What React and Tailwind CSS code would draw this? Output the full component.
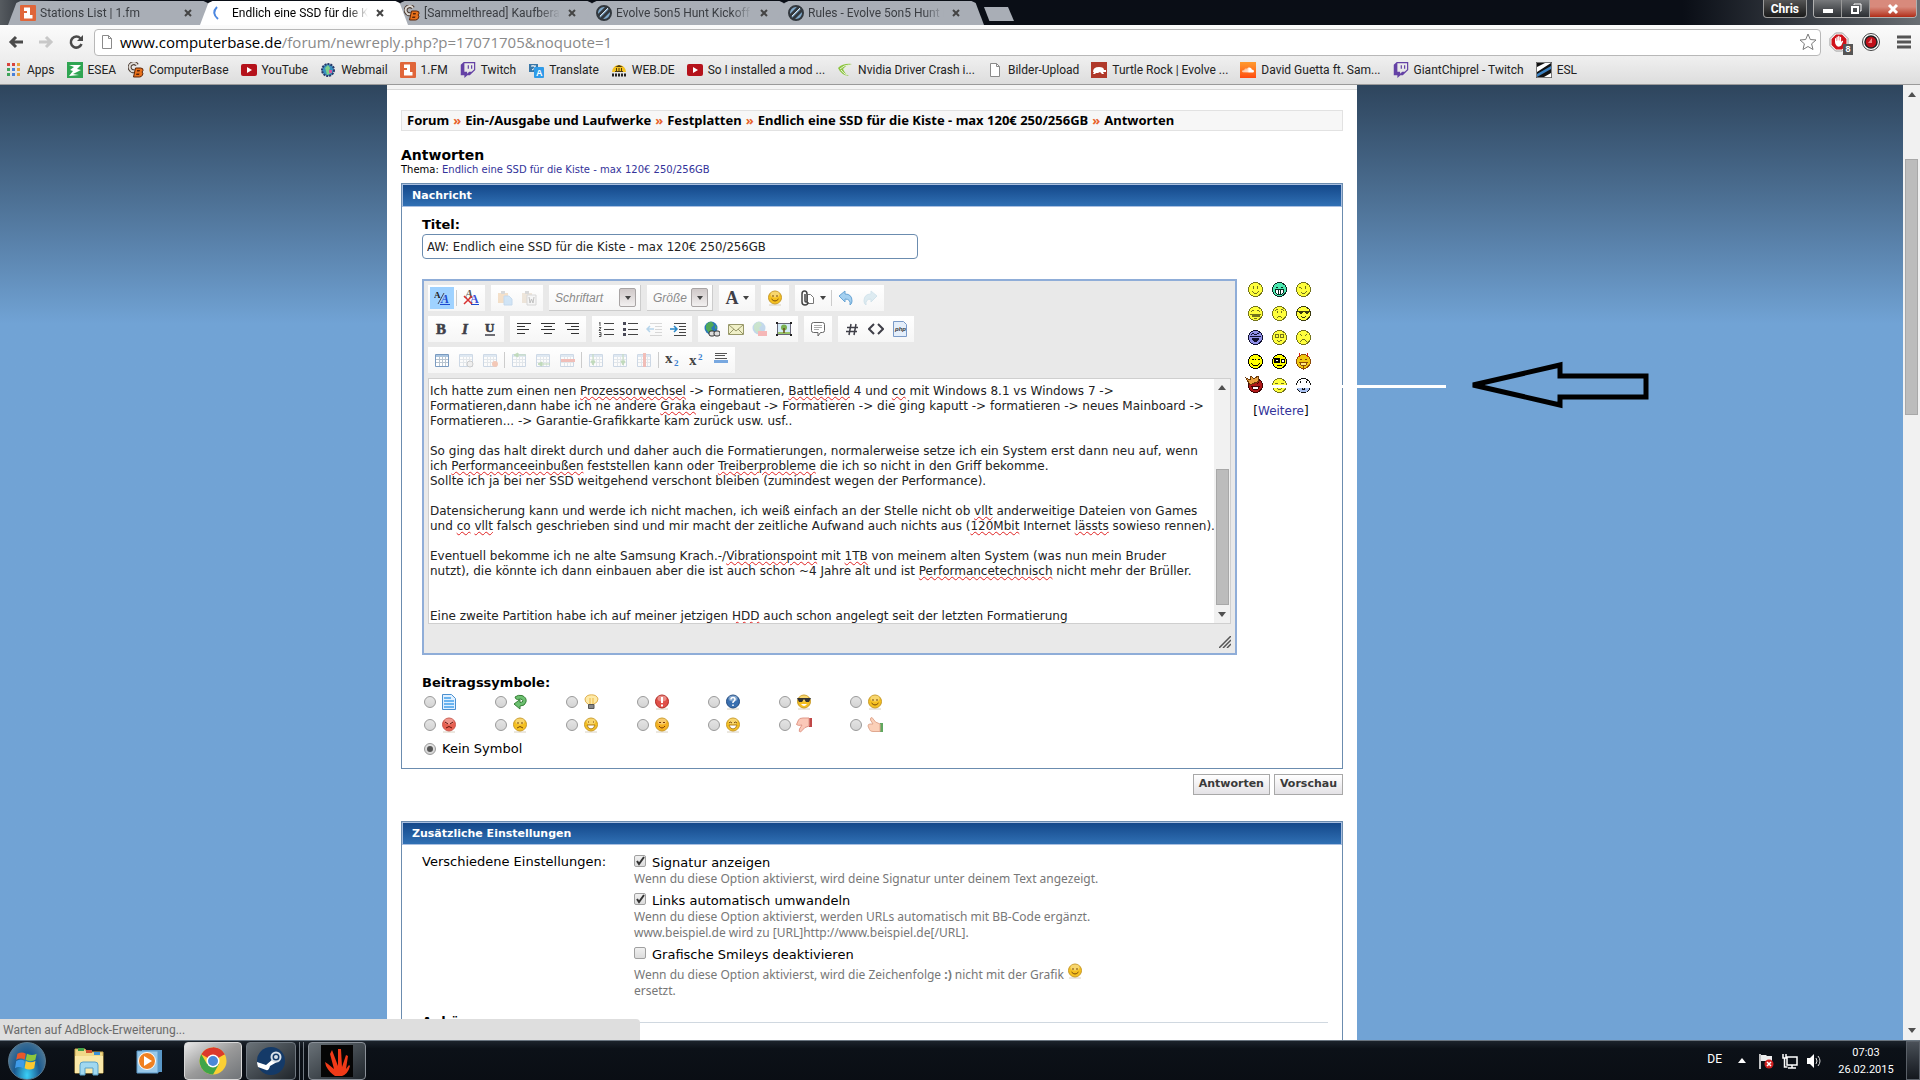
import { useState } from 'react';
import clsx from 'clsx';
import { FaTwitch, FaSoundcloud } from 'react-icons/fa';

/* ---------- favicons ---------- */

function FmIcon() {
  return (
    <svg viewBox="0 0 16 16" className="w-4 h-4 shrink-0">
      <rect width="16" height="16" rx="1" fill="#e0663a" />
      <path d="M4 2.500h6v7.500h2.500v3.500H4V8h3V6H4z" fill="#fff" />
    </svg>
  );
}

function CbIcon() {
  return (
    <svg viewBox="0 0 16 16" className="w-4 h-4 shrink-0">
      <path d="M9 3A4 4 0 1 0 7 9" fill="none" stroke="#4a3a30" strokeWidth="4" />
      <path d="M9 3A4 4 0 1 0 7 9" fill="none" stroke="#dcd8d4" strokeWidth="2" />
      <path d="M7.500 6h5q3 0 2.500 2.500L14 10q1.500 1 .5 3-1 2-3 2H5.500z" fill="#e8711c" stroke="#5a2408" />
      <path d="M9 8h3l-.5 1.500H9zM8.500 11.500h3l-.5 1.500h-3z" fill="#5a2408" />
    </svg>
  );
}

function EslRoundIcon() {
  return (
    <svg viewBox="0 0 16 16" className="w-4 h-4 shrink-0">
      <circle cx="8" cy="8" r="7" fill="#7fa8c8" stroke="#32383e" strokeWidth="2" />
      <path d="M2 11 11 2M5 14 14 5" stroke="#32383e" strokeWidth="3" />
      <path d="M4 11 12 3" stroke="#d8e2ea" strokeWidth="1" />
    </svg>
  );
}

function SpinnerIcon() {
  return (
    <svg viewBox="0 0 16 16" className="w-4 h-4 shrink-0">
      <path d="M5 2Q-1 8 6 14" fill="none" stroke="#4a86e0" strokeWidth="2" />
    </svg>
  );
}

function AppsIcon() {
  const colors = ['#d8433c', '#d8433c', '#e8a33c', '#3fa45a', '#4a80d8', '#e8a33c', '#3fa45a', '#4a80d8', '#e8a33c'];
  return (
    <svg viewBox="0 0 16 16" className="w-4 h-4 shrink-0">
      {colors.map((c, i) => (
        <rect key={i} x={1 + (i % 3) * 5} y={1 + Math.floor(i / 3) * 5} width="3" height="3" fill={c} />
      ))}
    </svg>
  );
}

function EseaIcon() {
  return (
    <svg viewBox="0 0 16 16" className="w-4 h-4 shrink-0">
      <rect width="16" height="16" fill="#2fa552" />
      <path d="M2 3h12l-4 4 4 1-8 4 6 1-10 1 4-5-3-1 4-3z" fill="#fff" />
    </svg>
  );
}

function YoutubeIcon() {
  return (
    <svg viewBox="0 0 16 16" className="w-4 h-4 shrink-0">
      <rect y="2" width="16" height="12" rx="2" fill="#b5121b" />
      <path d="M6 5v6l5-3z" fill="#fff" />
    </svg>
  );
}

function WebmailIcon() {
  return (
    <svg viewBox="0 0 16 16" className="w-4 h-4 shrink-0">
      <circle cx="8" cy="8" r="6" fill="#3a8fc0" stroke="#283a6a" strokeDasharray="2 1" strokeWidth="2" />
      <path d="M5 6 8 3l2 3-1 3 2 2-4 2-1-4z" fill="#7dd08a" />
      <path d="M9 8h3v3H9z" fill="#d05aa0" />
    </svg>
  );
}

function TranslateIcon() {
  return (
    <svg viewBox="0 0 16 16" className="w-4 h-4 shrink-0">
      <path d="M1 2h9v8H1z" fill="#3a78a8" />
      <path d="M3 4h5M5 3v1M4 8q3-1 3-4" stroke="#fff" fill="none" />
      <rect x="6" y="5" width="10" height="11" rx="1" fill="#2f9be8" />
      <text x="8" y="14" fontSize="9" fontWeight="bold" fill="#fff" fontFamily="Liberation Sans">A</text>
    </svg>
  );
}

function WebdeIcon() {
  return (
    <svg viewBox="0 0 16 16" className="w-4 h-4 shrink-0">
      <path d="M1 10a7 7 0 1 1 14 0z" fill="#f3c01e" />
      <path d="M4 5 8 3l4 2zM5 6h1v3H5zM7.500 6h1v3h-1zM10 6h1v3h-1zM4 9h8v1H4z" fill="#4a3a10" />
      <path d="M1 13h14" stroke="#222" strokeWidth="3" strokeDasharray="2 1" />
    </svg>
  );
}

function NvidiaIcon() {
  return (
    <svg viewBox="0 0 16 16" className="w-4 h-4 shrink-0">
      <path d="M1 6Q6 1 15 2 9 3 6 7q2 5 6 7Q4 13 1 6z" fill="#8cc540" />
      <path d="M3 7q4-4 9-4M4 8q3 4 6 5M8 8q2-3 6-4" stroke="#e8f2d8" fill="none" />
    </svg>
  );
}

function FileIcon() {
  return (
    <svg viewBox="0 0 16 16" className="w-4 h-4 shrink-0">
      <path d="M3.500 1.500h6l3 3v10h-9z" fill="#fff" stroke="#8a8a8a" />
      <path d="M9.500 1.500v3h3" fill="none" stroke="#8a8a8a" />
    </svg>
  );
}

function TurtleIcon() {
  return (
    <svg viewBox="0 0 16 16" className="w-4 h-4 shrink-0">
      <rect width="16" height="16" fill="#b0392a" />
      <path d="M2 10q0-5 6-5 5 0 5 3h2v2h-3l1 2h-2l-2-2-2 1H5l-1 1H2l1-2z" fill="#fff" />
    </svg>
  );
}

function SoundcloudIcon() {
  return (
    <span className="w-4 h-4 shrink-0 flex items-center justify-center bg-linear-to-b from-[#ff9a2e] to-[#ff4a10]">
      <FaSoundcloud className="w-3 h-3 text-white" />
    </span>
  );
}

function TwitchIcon() {
  return <FaTwitch className="w-4 h-4 shrink-0 text-[#6441a5]" />;
}

function EslIcon() {
  return (
    <svg viewBox="0 0 16 16" className="w-4 h-4 shrink-0">
      <rect width="16" height="16" fill="#111" />
      <path d="M1 5 9 1h6L1 10zM15 11 8 15h7z" fill="#fff" />
      <path d="M1 12 15 4v3L1 15z" fill="#3a80c0" />
      <path d="M.5.500h15v15H.500z" fill="none" stroke="#777" />
    </svg>
  );
}

const tabs = [
  { title: 'Stations List | 1.fm', icon: FmIcon },
  { title: 'Endlich eine SSD für die Ki', icon: SpinnerIcon, active: true },
  { title: '[Sammelthread] Kaufberat', icon: CbIcon },
  { title: 'Evolve 5on5 Hunt Kickoff', icon: EslRoundIcon },
  { title: 'Rules - Evolve 5on5 Hunt I', icon: EslRoundIcon },
];

const bookmarks = [
  ['Apps', AppsIcon],
  ['ESEA', EseaIcon],
  ['ComputerBase', CbIcon],
  ['YouTube', YoutubeIcon],
  ['Webmail', WebmailIcon],
  ['1.FM', FmIcon],
  ['Twitch', TwitchIcon],
  ['Translate', TranslateIcon],
  ['WEB.DE', WebdeIcon],
  ['So I installed a mod ...', YoutubeIcon],
  ['Nvidia Driver Crash i...', NvidiaIcon],
  ['Bilder-Upload', FileIcon],
  ['Turtle Rock | Evolve ...', TurtleIcon],
  ['David Guetta ft. Sam...', SoundcloudIcon],
  ['GiantChiprel - Twitch', TwitchIcon],
  ['ESL', EslIcon],
];

/* ---------- browser ---------- */

function TabStrip() {
  return (
    <div className="h-[25px] flex items-end bg-linear-to-r from-[#565b60] via-[#0a0e16] via-3% to-[#0a0e16] font-['Roboto','Noto_Sans',sans-serif]">
      <div className="flex pl-2 h-6">
        {tabs.map(({ title, icon: Icon, active }) => (
          <div
            key={title}
            className={clsx(
              'w-52 -mr-4 pl-3 pr-6 flex items-center gap-1 text-xs [clip-path:polygon(0_100%,4%_8%,6%_0,94%_0,96%_8%,100%_100%)]',
              active ? 'relative z-10 bg-white text-black' : 'bg-[#a9aeb6] text-[#3a3d42]'
            )}
          >
            <Icon />
            <span className="flex-1 min-w-0 whitespace-nowrap [mask-image:linear-gradient(to_right,black_85%,transparent)]">
              {title}
            </span>
            <button aria-label="Tab schließen" className="ml-1 w-2 h-2 shrink-0">
              <svg viewBox="0 0 8 8" className="w-2 h-2"><path d="M1 1l6 6M7 1 1 7" stroke="#444" strokeWidth="2" /></svg>
            </button>
          </div>
        ))}
      </div>
      <button aria-label="Neuer Tab" className="ml-4 mb-1 w-[30px] h-[14px] bg-[#a9aeb6] [clip-path:polygon(0_0,80%_0,100%_100%,18%_100%)]" />
      <div className="ml-auto self-start flex items-start gap-[6px] pr-[3px] pl-20 h-full bg-linear-to-r from-[#0a0e16] to-[#6a6f74]">
        <button className="h-[18px] px-[7px] rounded-b border border-t-0 border-[#9a9a9a] bg-linear-to-b from-[#555] to-[#1a1a1a] text-white text-xs font-bold">
          Chris
        </button>
        <div className="flex h-[18px] rounded-b border border-t-0 border-[#b0b0b0] overflow-hidden">
          <button aria-label="Minimieren" className="w-7 bg-linear-to-b from-[#77797c] to-[#2c2f33] border-r border-[#999] flex items-center justify-center">
            <span className="w-[10px] h-1 bg-white mt-1" />
          </button>
          <button aria-label="Verkleinern" className="w-7 bg-linear-to-b from-[#77797c] to-[#2c2f33] border-r border-[#999] flex items-center justify-center">
            <svg viewBox="0 0 12 12" className="w-3 h-3" fill="none" stroke="#fff">
              <path d="M4 2V1h7v7h-1" />
              <path d="M2 4h6v6H2z" strokeWidth="2" />
            </svg>
          </button>
          <button aria-label="Schließen" className="w-[46px] bg-linear-to-b from-[#d88a7c] from-40% to-[#b02a14] flex items-center justify-center">
            <svg viewBox="0 0 12 12" className="w-3 h-3"><path d="M2 2l8 8M10 2l-8 8" stroke="#fff" strokeWidth="3" /></svg>
          </button>
        </div>
      </div>
    </div>
  );
}

function Toolbar() {
  return (
    <div className="h-[34px] bg-linear-to-b from-[#fbfbfb] to-[#eeeeee] flex items-center pl-2 pr-[9px]">
      <div className="flex gap-[14px] mr-[10px]">
        <button aria-label="Zurück">
          <svg viewBox="0 0 16 16" className="w-4 h-4"><path d="M15 8H3M8 3 3 8l5 5" fill="none" stroke="#4a4a4a" strokeWidth="3" /></svg>
        </button>
        <button aria-label="Vorwärts">
          <svg viewBox="0 0 16 16" className="w-4 h-4"><path d="M1 8h12M8 3l5 5-5 5" fill="none" stroke="#c8c8c8" strokeWidth="3" /></svg>
        </button>
        <button aria-label="Neu laden">
          <svg viewBox="0 0 16 16" className="w-4 h-4">
            <path d="M12.500 4.500A5.500 5.500 0 1 0 13.500 10" fill="none" stroke="#4a4a4a" strokeWidth="2.500" />
            <path d="M15 1v6H9z" fill="#4a4a4a" />
          </svg>
        </button>
      </div>
      <div className="relative flex-1 h-[27px] flex items-center gap-1 pl-1 pr-[2px] bg-white border border-[#b8b8b8] rounded-sm">
        <FileIcon />
        <label htmlFor="url" className="absolute left-[25px] text-[15px] leading-5 text-[#8a8a8a] font-['Open_Sans','Noto_Sans',sans-serif]">
          <span className="text-black">www.computerbase.de</span>/forum/newreply.php?p=17071705&amp;noquote=1
        </label>
        <input id="url" type="text" className="flex-1 min-w-0 bg-transparent outline-none" />
        <button aria-label="Lesezeichen">
          <svg viewBox="0 0 20 20" className="w-5 h-5">
            <path d="M10 2l2.300 5.500 5.700.5-4.400 3.800 1.400 5.700-5-3-5 3 1.400-5.700L2 8l5.700-.5z" fill="#fff" stroke="#7a7a7a" strokeLinejoin="round" />
          </svg>
        </button>
      </div>
      <div className="flex items-center gap-3 ml-2">
        <button aria-label="AdBlock" className="relative">
          <svg viewBox="0 0 20 20" className="w-5 h-5">
            <path d="M6.500 1h7L19 6.500v7L13.500 19h-7L1 13.500v-7z" fill="#fff" stroke="#999" />
            <path d="M7 2.500h6L17.500 7v6L13 17.500H7L2.500 13V7z" fill="#d0121a" />
            <path d="M6 10V6.500q.5-1 1.200 0V9h.3V5q.7-1 1.300 0v3.500h.3V4.300q.8-1 1.400 0V8.500h.3V5.300q.7-1 1.300 0V10l1-1.200q1-.3 1 .6l-1.800 4.100q-2.200 2-4.500.5Q6 12.500 6 10z" fill="#fff" />
          </svg>
          <span className="absolute left-[14px] top-3 w-[10px] h-[11px] bg-[#555] text-white text-[9px] leading-[11px] text-center font-bold font-['Liberation_Sans',sans-serif]">
            8
          </span>
        </button>
        <button aria-label="Aufnahme">
          <svg viewBox="0 0 20 20" className="w-5 h-5">
            <circle cx="10" cy="10" r="8.500" fill="#fff" stroke="#444" />
            <circle cx="10" cy="10" r="6" fill="#c0101a" stroke="#222" strokeWidth="1.500" />
            <path d="M7 11 11 6v5z" fill="#f08a8a" />
          </svg>
        </button>
        <button aria-label="Menü" className="ml-1">
          <svg viewBox="0 0 14 14" className="w-[14px] h-[14px]"><path d="M0 2h14M0 7h14M0 12h14" stroke="#555" strokeWidth="3" /></svg>
        </button>
      </div>
    </div>
  );
}

function BookmarkBar() {
  return (
    <nav className="h-[26px] px-[6px] pb-1 flex items-center gap-3 overflow-hidden bg-linear-to-b from-[#eeeeee] to-[#dddddd] border-b border-[#9a9a9a] font-['Roboto','Noto_Sans',sans-serif]">
      {bookmarks.map(([name, Icon]) => (
        <a key={name} href="#" className="flex items-center gap-[5px] text-xs text-[#222] whitespace-nowrap">
          <Icon />
          {name}
        </a>
      ))}
    </nav>
  );
}

function ScrollArrow({ down }) {
  return (
    <svg viewBox="0 0 8 5" className={clsx('w-2 h-[5px]', down && 'rotate-180')}>
      <path d="M0 5 4 0l4 5z" fill="#505050" />
    </svg>
  );
}

/* ---------- smileys ---------- */

const smileys = [
  { fill: '#ffff3c', line: '#74741c', d: 'M5.500 4v3M9.500 4v3M4 9.500h1M5 10.500h1M6 11.500h3M9 10.500h1M10 9.500h1' },
  { fill: '#4ce8b0', line: '#0a2a20', d: 'M4 5.500h2M9 5.500h2M3.500 7.500h8v3l-2 2h-4l-2-2zM6.500 8v4M8.500 8v4', mouth: '#fff' },
  { fill: '#ffff3c', line: '#74741c', d: 'M3 5.500h2M5 6.500h1M9.500 4v3M5 10.500h1M6 11.500h3M9 10.500h1M10 9.500h1' },
  { fill: '#ffff3c', line: '#74741c', d: 'M3 5.500h1M4 4.500h2M9 4.500h2M11 5.500h1M2 8.500h11M4 9.500h7v1H4zM6 12.500h3' },
  { fill: '#ffff3c', line: '#74741c', d: 'M3 4.500h1M4 3.500h2M9 3.500h2M11 4.500h1M5.500 5v2M9.500 5v2M5 11.500h1M6 10.500h3M9 11.500h1' },
  { fill: '#ffff3c', line: '#3a3a10', d: 'M1 5.500h13M3 6.500h4M9 6.500h4M4 7.500h2M10 7.500h2M5 10.500h1M6 11.500h3M9 10.500h1' },
  { fill: '#9090e8', line: '#101030', d: 'M4 3.500h2M9 3.500h2M3 4.500h1M6 4.500h3M2 6.500h11M4 8.500h7M4 9.500h7M5 10.500h5M6 11.500h3' },
  { fill: '#ffff3c', line: '#74741c', d: 'M3.500 4.500h3v3h-3zM8.500 4.500h3v3h-3zM5 10.500h1M6 11.500h2M8 10.500h2' },
  { fill: '#ffff3c', line: '#74741c', d: 'M4 4.500h1M5 5.500h1M10 4.500h1M9 5.500h1M4 11.500h1M5 10.500h1M6 9.500h3M9 10.500h1M10 11.500h1' },
  { fill: '#ffff00', line: '#000', d: 'M4 5.500h2M7 5.500h1M10 5.500h2M3 9.500h1M4 10.500h1M5 11.500h5M10 10.500h1M11 9.500h1' },
  { fill: '#ffff00', line: '#000', d: 'M2.500 4.500h5v4h-5zM3 5.500h3v2H3zM9.500 5.500h3v3h-3zM5 11.500h5', mouth: '#fff' },
  { fill: '#f0c810', line: '#8a4a08', d: 'M4 5.500h2M9 5.500h2M3.500 8.500h8l-2 3h-4zM7.500 12v4', mouth: '#ffe880' },
  { fill: '#b01818', line: '#400404', d: 'M4 4.500h1M5 5.500h1M10 4.500h1M9 5.500h1M3.500 8.500h8l-2 3h-4z', mouth: '#fff' },
  { fill: '#ffff3c', line: '#74741c', d: 'M3 5.500h3M9 5.500h3M4 9.500h1M5 10.500h1M6 11.500h3M9 10.500h1M10 9.500h1' },
  { fill: '#fff', line: '#101010', d: 'M4.500 3v2M10.500 3v2M6.500 9.500h2v2h-2z' },
];

function Smiley({ fill, line, d, mouth = 'none', index }) {
  return (
    <svg viewBox="0 0 15 15" className="w-[15px] h-[15px] overflow-visible" shapeRendering="crispEdges">
      <circle cx="7.500" cy="7.500" r="7" fill={fill} stroke={line} />
      {index === 14 && <path d="M1 9h13l-1 3-3 2H5l-3-2z" fill="#a8c0f0" />}
      <path d={d} fill={mouth} stroke={line} />
      {index === 11 && <path d="M3.500 3v-4M11.500 3v-4" stroke="#d02010" />}
      {index === 12 && <path d="M-2 0 2 2l1-4 3 3 4-3 1 5-9 4z" fill="#e8a040" stroke="#6a3808" />}
    </svg>
  );
}

/* Glossy round face used by the toolbar and the post icons */
function Face({ color = '#f5c020', edge = '#c89a28', children }) {
  return (
    <svg viewBox="0 0 16 16" className="w-4 h-4">
      <path d="M2 15h12" stroke="#d8d0c0" />
      <circle cx="8" cy="7.500" r="6.500" fill={color} stroke={edge} />
      <ellipse cx="8" cy="4.500" rx="4.500" ry="3" fill="#fff" opacity=".35" />
      {children}
    </svg>
  );
}

function SmileFace() {
  return (
    <Face>
      <path d="M6 5v2M10 5v2M4.500 9q3.500 4 7 0" fill="none" stroke="#7a4a08" />
    </Face>
  );
}

/* ---------- editor toolbar ---------- */

const table = (
  <>
    <path d="M1.500 2.500h13v12h-13z" fill="#fff" stroke="#7a9ac0" />
    <path d="M2 4h12" stroke="#a8c4e0" strokeWidth="2" />
    <path d="M2 7.500h12M2 10.500h12M5.500 4v10M8.500 4v10M11.500 4v10" stroke="#b8c4d0" />
  </>
);

const icons = {
  wysiwyg: (
    <>
      <text x="0" y="8" fontSize="9" fontWeight="bold" fontFamily="Liberation Serif" fill="#222">A</text>
      <path d="M4 14 10 3" stroke="#445" />
      <text x="7" y="13" fontSize="12" fontWeight="bold" fontStyle="italic" fontFamily="Liberation Serif" fill="#1a4ad0">A</text>
      <path d="M6 14.500h10" stroke="#1a4ad0" />
    </>
  ),
  clear: (
    <>
      <text x="2" y="8" fontSize="12" fontStyle="italic" fontWeight="bold" fontFamily="Liberation Serif" fill="#555">A</text>
      <text x="7" y="13" fontSize="12" fontWeight="bold" fontFamily="Liberation Serif" fill="#3a50d8">A</text>
      <path d="M8 14.500h8" stroke="#1a4ad0" />
      <path d="M1 6l8 8M9 6l-8 8" stroke="#d83030" strokeWidth="1.500" />
    </>
  ),
  paste: (
    <>
      <path d="M1 3h10v10H1z" fill="#e8b070" /><path d="M4 1h4v3H4z" fill="#999" />
      <path d="M7 6h5l3 3v6H7z" fill="#88c0f0" stroke="#68a0d8" />
    </>
  ),
  pasteWord: (
    <>
      <path d="M1 3h10v10H1z" fill="#d8c0a0" /><path d="M4 1h4v3H4z" fill="#999" />
      <path d="M6 5h9v10H6z" fill="#eee" stroke="#999" />
      <path d="M8 7l1 6 1.500-4 1.500 4 1-6" fill="none" stroke="#555" />
    </>
  ),
  bold: <text x="2" y="13" fontSize="15" fontWeight="bold" fontFamily="Liberation Serif" fill="#3f3f48" stroke="#3f3f48" strokeWidth=".6">B</text>,
  italic: <text x="4" y="13" fontSize="15" fontWeight="bold" fontStyle="italic" fontFamily="Liberation Serif" fill="#3f3f48" stroke="#3f3f48" strokeWidth=".6">I</text>,
  underline: (
    <>
      <text x="3" y="11" fontSize="13" fontWeight="bold" fontFamily="Liberation Serif" fill="#3f3f48" stroke="#3f3f48" strokeWidth=".6">U</text>
      <path d="M3 14h10" stroke="#3f3f48" strokeWidth="1.500" />
    </>
  ),
  left: <path d="M1 2.500h14M1 5.500h8M1 8.500h12M1 12.500h8" stroke="#333" />,
  center: <path d="M1 2.500h14M4 5.500h8M1 8.500h14M4 12.500h8" stroke="#333" />,
  right: <path d="M1 2.500h14M7 5.500h8M3 8.500h12M7 12.500h8" stroke="#333" />,
  ol: (
    <>
      <path d="M6 2.500h10M6 8.500h10M6 13.500h10" stroke="#444" />
      <path d="M2 1v4M1 2h1M1 6.500h2L1 9.500h2M1 11.500h2v4H1M1 13.500h2" fill="none" stroke="#555" />
    </>
  ),
  ul: (
    <>
      <path d="M6 2.500h10M6 8.500h10M6 13.500h10" stroke="#444" />
      <path d="M1 1h3v3H1zM1 7h3v3H1zM1 12h3v3H1z" fill="#4a4a58" />
    </>
  ),
  outdent: (
    <>
      <path d="M4 2.500h12M9 5.500h7M9 8.500h7M9 11.500h7M4 14.500h12" stroke="#999" />
      <path d="M8 8H2M4 5 1 8l3 3" fill="none" stroke="#3a90d0" strokeWidth="1.500" />
    </>
  ),
  indent: (
    <>
      <path d="M4 2.500h12M9 5.500h7M9 8.500h7M9 11.500h7M4 14.500h12" stroke="#444" />
      <path d="M0 8h6M4 5l3 3-3 3" fill="none" stroke="#2a88c8" strokeWidth="1.500" />
    </>
  ),
  link: (
    <>
      <circle cx="7" cy="7" r="6.500" fill="#2a78b8" />
      <path d="M2 4q3-4 6-3l2 3-3 3 2 3-4 2-3-4zM11 4l2 3-2 1z" fill="#4fa858" />
      <rect x="5" y="10" width="6" height="5" rx="2" fill="#ddd" stroke="#333" />
      <rect x="10" y="10" width="6" height="5" rx="2" fill="#ddd" stroke="#333" />
    </>
  ),
  mail: (
    <>
      <path d="M.5 3.500h15v10H.500z" fill="#f0f0c8" stroke="#98986a" />
      <path d="M1 4l7 6 7-6M1 13l5-5M15 13l-5-5" fill="none" stroke="#98986a" />
    </>
  ),
  unlink: (
    <>
      <circle cx="7" cy="7" r="6.500" fill="#5a98d0" />
      <path d="M2 4q3-4 6-3l2 3-3 3 2 3-4 2-3-4z" fill="#70b878" />
      <path d="M6 10h9v5H6z" fill="#f04040" />
    </>
  ),
  image: (
    <>
      <path d="M1.500 2.500h13v11h-13z" fill="#d4ecf8" stroke="#667" />
      <path d="M2 11h12v2H2z" fill="#98c468" /><circle cx="8" cy="6.500" r="3" fill="#7ab050" />
      <path d="M8 7v5" stroke="#6a4818" strokeWidth="1.500" />
      <path d="M0 1h2v2H0zM14 1h2v2h-2zM0 13h2v2H0zM14 13h2v2h-2z" fill="#222" />
    </>
  ),
  quote: (
    <>
      <path d="M3.500 1.500h9q2 0 2 2v6q0 2-2 2h-2L8 15v-3.500H3.500q-2 0-2-2v-6q0-2 2-2z" fill="#fff" stroke="#666" />
      <path d="M4 4.500h8M4 6.500h8M4 8.500h5" stroke="#aaa" />
    </>
  ),
  code: <path d="M7 3 5 14M12 3l-2 11M3 6.500h11M2 10.500h11" stroke="#3f3f48" strokeWidth="1.500" />,
  html: <path d="M6 3 1 8l5 5M10 3l5 5-5 5" fill="none" stroke="#3f3f48" strokeWidth="2" />,
  php: (
    <>
      <path d="M1.500.500h10l3 3v12h-13z" fill="#e4eefa" stroke="#7a9ac8" />
      <text x="3" y="10" fontSize="6" fontWeight="bold" fontStyle="italic" fontFamily="Liberation Sans" fill="#333">php</text>
    </>
  ),
  table,
  tableProps: <>{table}<circle cx="12" cy="12" r="3" fill="#ddd" stroke="#777" /></>,
  tableDel: <>{table}<circle cx="13" cy="12" r="3" fill="#e87040" /></>,
  rowBefore: <>{table}<path d="M6 3h9M3 3l4-2v4z" stroke="#58a048" fill="#58a048" /></>,
  rowAfter: <>{table}<path d="M6 12h9M3 12l4-2v4z" stroke="#58a048" fill="#58a048" /></>,
  rowDel: <>{table}<path d="M2 8.500h14" stroke="#e05040" strokeWidth="3" /></>,
  colBefore: <>{table}<path d="M5 2v8M3 9l2 4 2-4z" stroke="#58a048" fill="#58a048" /></>,
  colAfter: <>{table}<path d="M11 2v8M9 9l2 4 2-4z" stroke="#58a048" fill="#58a048" /></>,
  colDel: <>{table}<path d="M8.500 1v14" stroke="#e05040" strokeWidth="3" /></>,
  sub: (
    <>
      <text x="0" y="11" fontSize="15" fontWeight="bold" fontFamily="Liberation Serif" fill="#444">x</text>
      <text x="9" y="14" fontSize="9" fontWeight="bold" fontFamily="Liberation Serif" fill="#3a80d0">2</text>
    </>
  ),
  sup: (
    <>
      <text x="0" y="13" fontSize="15" fontWeight="bold" fontFamily="Liberation Serif" fill="#444">x</text>
      <text x="9" y="8" fontSize="9" fontWeight="bold" fontFamily="Liberation Serif" fill="#3a80d0">2</text>
    </>
  ),
  hr: (
    <>
      <path d="M2 1.500h12M2 3.500h10M2 6.500h12" stroke="#555" />
      <path d="M1 9.500h14" stroke="#78a8e0" strokeWidth="3" />
    </>
  ),
  undo: <path d="M1 6l6-5v3q7 0 7 7 0 3-2 4 1-6-5-6v3z" fill="#a4d0f0" stroke="#68a4d4" />,
  redo: <path d="M15 6 9 1v3q-7 0-7 7 0 3 2 4-1-6 5-6v3z" fill="#a8d0e0" stroke="#88b8d0" />,
};

function Tool({ name, on, faded }) {
  return (
    <button
      aria-label={name}
      className={clsx('w-6 h-[22px] flex items-center justify-center', on && 'bg-[#9fd2ff]', faded && 'opacity-35')}
    >
      <svg viewBox="0 0 16 16" className="w-4 h-4">{icons[name]}</svg>
    </button>
  );
}

function Group({ children }) {
  return <div className="h-[26px] p-0.5 flex items-center bg-linear-to-b from-white to-[#f6f6f6]">{children}</div>;
}

function Sep() {
  return <span className="w-px h-4 mx-0.5 bg-[#ccc]" />;
}

function Caret() {
  return <svg viewBox="0 0 6 4" className="w-[6px] h-1"><path d="M0 0h6L3 4z" fill="#444" /></svg>;
}

function Combo({ label, width }) {
  return (
    <div className={clsx('relative h-[26px] bg-linear-to-b from-white to-[#f6f6f6] border-b border-r border-[#ccc]', width)}>
      <select
        aria-label={label}
        className="appearance-none w-full h-full pl-[6px] pb-0.5 outline-none text-xs italic text-[#8a8a8a] font-['Liberation_Sans',sans-serif]"
      >
        <option>{label}</option>
      </select>
      <span className="absolute right-1 top-[3px] w-[17px] h-[19px] flex items-center justify-center rounded-xs border border-[#a8a4a4] bg-linear-to-b from-[#cfc8c8] to-[#f2f0f0] pointer-events-none">
        <Caret />
      </span>
    </div>
  );
}

function EditorToolbar() {
  return (
    <div className="flex flex-col gap-[5px] mb-[5px]">
      <div className="flex gap-[6px]">
        <Group><Tool name="wysiwyg" on /><Sep /><Tool name="clear" /></Group>
        <Group><Tool name="paste" faded /><Tool name="pasteWord" faded /></Group>
        <Combo label="Schriftart" width="w-[92px]" />
        <Combo label="Größe" width="w-[66px]" />
        <Group>
          <button aria-label="Textfarbe" className="w-8 flex items-center justify-center gap-1 text-lg leading-5 font-bold text-[#3f3f48] font-['Liberation_Serif',serif]">
            A <Caret />
          </button>
        </Group>
        <Group><button aria-label="Smileys" className="w-6 flex justify-center"><SmileFace /></button></Group>
        <Group>
          <button aria-label="Anhang" className="w-8 flex items-center justify-center gap-1">
            <svg viewBox="0 0 16 16" className="w-4 h-4">
              <path d="M7.500 4.500h3l3 3v6h-6z" fill="#fff" stroke="#777" />
              <path d="M5 4v7q0 1 1 1t1-1V4q0-3-2.500-3T2 4v8q0 3 3 3t3-3" fill="none" stroke="#444" strokeWidth="1.500" />
            </svg>
            <Caret />
          </button>
          <Sep />
          <Tool name="undo" /><Tool name="redo" faded />
        </Group>
      </div>
      <div className="flex gap-[6px]">
        <Group><Tool name="bold" /><Tool name="italic" /><Tool name="underline" /></Group>
        <Group><Tool name="left" /><Tool name="center" /><Tool name="right" /></Group>
        <Group><Tool name="ol" /><Tool name="ul" /><Tool name="outdent" faded /><Tool name="indent" /></Group>
        <Group><Tool name="link" /><Tool name="mail" /><Tool name="unlink" faded /><Tool name="image" /></Group>
        <Group><Tool name="quote" /></Group>
        <Group><Tool name="code" /><Tool name="html" /><Tool name="php" /></Group>
      </div>
      <div className="flex">
        <Group>
          <Tool name="table" /><Tool name="tableProps" faded /><Tool name="tableDel" faded /><Sep />
          <Tool name="rowBefore" faded /><Tool name="rowAfter" faded /><Tool name="rowDel" faded /><Sep />
          <Tool name="colBefore" faded /><Tool name="colAfter" faded /><Tool name="colDel" faded /><Sep />
          <Tool name="sub" /><Tool name="sup" /><Tool name="hr" />
        </Group>
      </div>
    </div>
  );
}

// words between * are flagged by the spell checker
const message = [
  'Ich hatte zum einen nen *Prozessorwechsel* -> Formatieren, *Battlefield* 4 und *co* mit Windows 8.1 vs Windows 7 ->',
  'Formatieren,dann habe ich ne andere *Graka* eingebaut -> Formatieren -> die ging kaputt -> formatieren -> neues Mainboard ->',
  'Formatieren... -> Garantie-Grafikkarte kam zurück usw. usf..',
  '',
  'So ging das halt direkt durch und daher auch die Formatierungen, normalerweise setze ich ein System erst dann neu auf, wenn',
  'ich *Performanceeinbußen* feststellen kann oder *Treiberprobleme* die ich so nicht in den Griff bekomme.',
  'Sollte ich ja bei ner SSD weitgehend verschont bleiben (zumindest wegen der Performance).',
  '',
  'Datensicherung kann und werde ich nicht machen, ich weiß einfach an der Stelle nicht ob *vllt* anderweitige Dateien von Games',
  'und *co* *vllt* falsch geschrieben sind und mir macht der zeitliche Aufwand auch nichts aus (*120Mbit* Internet *lässts* sowieso rennen).',
  '',
  'Eventuell bekomme ich ne alte Samsung Krach.-/*Vibrationspoint* mit *1TB* von meinem alten System (was nun mein Bruder',
  'nutzt), die könnte ich dann einbauen aber die ist auch schon ~4 Jahre alt und ist *Performancetechnisch* nicht mehr der Brüller.',
  '',
  '',
  'Eine zweite Partition habe ich auf meiner jetzigen *HDD* auch schon angelegt seit der letzten Formatierung',
];

function Editor() {
  return (
    <div className="flex-1 min-w-0 border-2 border-[#8fadd8] bg-[#e9e9e9] p-1">
      <EditorToolbar />
      <div className="flex h-[246px] border border-[#cfcfcf] bg-white">
        <div
          role="textbox"
          aria-label="Nachricht"
          contentEditable
          suppressContentEditableWarning
          className="flex-1 min-w-0 overflow-hidden pt-[5px] pl-px text-xs leading-[15px] text-[#222] whitespace-nowrap outline-none"
        >
          {message.map((line, i) => (
            <p key={i} className="min-h-[15px]">
              {line.split('*').map((part, j) =>
                j % 2 ? (
                  <span key={j} className="underline decoration-wavy decoration-1 decoration-[#e02020] underline-offset-1">{part}</span>
                ) : (
                  part
                )
              )}
            </p>
          ))}
        </div>
        <div className="w-4 shrink-0 bg-[#f1f1f1] flex flex-col items-center py-[6px]">
          <ScrollArrow />
          <div className="w-[13px] h-[136px] mt-auto mb-[7px] bg-[#bcbcbc] border border-[#a8a8a8]" />
          <ScrollArrow down />
        </div>
      </div>
      <div className="h-[25px] pb-px flex justify-end items-end">
        <svg viewBox="0 0 12 12" className="w-3 h-3"><path d="M0 12 12 0M4 12l8-8M8 12l4-4" stroke="#555" strokeWidth="1.500" /></svg>
      </div>
    </div>
  );
}

/* ---------- post icons ---------- */

const postIcons = [
  ['Standard', (
    <svg viewBox="0 0 16 16" className="w-4 h-4">
      <path d="M1.500.500h9l4 4v11h-13z" fill="#e0f0ff" stroke="#4a90d0" />
      <path d="M3 4h7M3 7h10M3 10h10M3 13h10" stroke="#6ab4f0" strokeWidth="2" />
    </svg>
  )],
  ['Pfeil', (
    <svg viewBox="0 0 16 16" className="w-4 h-4">
      <path d="M3 3q3-2.500 7-1.500 5 2 4 6.500-1 4-6 4v3l-6-5 6-4.500V8.500q3 0 3-2Q9.500 4 5.500 5.500 3.500 5.500 3 3z" fill="#6cc070" stroke="#388038" />
    </svg>
  )],
  ['Lampe', (
    <svg viewBox="0 0 16 16" className="w-4 h-4">
      <path d="M5.500 10.500Q1.500 8 2 5 3 .800 8.500.800T15 5q.3 3-4.500 5.500z" fill="#fdeaa8" stroke="#e0b050" />
      <path d="M7 4v6M10 4v6" stroke="#f0b840" />
      <path d="M5.500 10.500h5.500v4H5.500z" fill="#888" stroke="#555" />
    </svg>
  )],
  ['Ausrufezeichen', <Face color="#e05048" edge="#b02820"><path d="M8 3v6M8 10.500v2" stroke="#fff" strokeWidth="2" /></Face>],
  ['Frage', (
    <Face color="#3a70b0" edge="#204a80">
      <path d="M6 5.500q0-2 2-2t2 2q0 1-2 2.500v1M8 10.500v1.500" fill="none" stroke="#fff" strokeWidth="1.500" />
    </Face>
  )],
  ['Cool', <Face><path d="M1 4h14l-2 4h-3L8 5 6 8H3z" fill="#333" /><path d="M5 10h6q-3 4-6 0z" fill="#fff" /></Face>],
  ['Lächeln', <SmileFace />],
  ['Böse', <Face color="#e86050" edge="#c85a50"><path d="M4 5l3 2M12 5 9 7M5 11q3-3 6 0" fill="none" stroke="#601008" /></Face>],
  ['Traurig', <Face><path d="M5 6h2M9 6h2M5 11q3-3 6 0" fill="none" stroke="#7a4a08" /></Face>],
  ['Lachen', <Face><path d="M5 5h1M10 5h1" stroke="#7a4a08" /><path d="M4 8h8q-1 4-4 4T4 8z" fill="#fff" stroke="#b08020" /></Face>],
  ['Verlegen', (
    <Face color="#f5b020">
      <path d="M5 6q1-2 2 0M9 6q1-2 2 0M5 9q3 4 6 0" fill="none" stroke="#7a3a08" />
    </Face>
  )],
  ['Grinsen', (
    <Face>
      <path d="M4 6q1-2 3 0M9 6q1-2 3 0" fill="none" stroke="#7a4a08" />
      <path d="M4 8h8q-1 4-4 4T4 8z" fill="#fff" stroke="#b08020" />
    </Face>
  )],
  ['Daumen runter', (
    <svg viewBox="0 0 16 16" className="w-4 h-4">
      <path d="M13 1h3v9h-3z" fill="#c04848" />
      <path d="M13 1H7Q3 1 2.500 3L.5 7.500Q2 9 6 8L3.500 12q-1 3 1 3L9 10.500 13 9z" fill="#fbc8b8" stroke="#e09888" />
    </svg>
  )],
  ['Daumen hoch', (
    <svg viewBox="0 0 16 16" className="w-4 h-4">
      <path d="M13 6h3v9h-3z" fill="#60a860" />
      <path d="M13 14.500H6q-3 0-3.500-2L1 9q0-2 2-2h3L3.500 3q-.5-2.500 1.500-2.500L8.500 5 13 7z" fill="#fbd0b8" stroke="#e0a890" />
    </svg>
  )],
];

function Radio(props) {
  return (
    <input
      type="radio"
      name="iconid"
      className="appearance-none w-3 h-3 rounded-full border border-[#999] bg-linear-to-b from-[#e4e4e4] to-[#d4d4d4] grid place-items-center checked:before:content-[''] checked:before:w-[6px] checked:before:h-[6px] checked:before:rounded-full checked:before:bg-[#555]"
      {...props}
    />
  );
}

/* ---------- forum page ---------- */

function Panel({ title, children, className }) {
  return (
    <section className={clsx('border border-[#6b8caf]', className)}>
      <h2 className="h-[23px] pl-[9px] pt-px flex items-center border border-[#a9bfe0] bg-linear-to-b from-[#14488a] to-[#3070b4] text-white text-[11px] font-bold">
        {title}
      </h2>
      {children}
    </section>
  );
}

function Option({ id, label, defaultChecked, children }) {
  return (
    <div className="mb-[5px]">
      <div className="flex items-center gap-[6px] h-[17px]">
        <span className="relative w-3 h-3 -mt-1">
          <input
            id={id}
            type="checkbox"
            defaultChecked={defaultChecked}
            className="peer appearance-none block w-3 h-3 rounded-xs border border-[#a0a0a0] bg-linear-to-b from-[#f0f0f0] to-[#dcdcdc]"
          />
          <svg viewBox="0 0 12 12" className="absolute inset-0 w-3 h-3 hidden peer-checked:block pointer-events-none">
            <path d="M3 6l2 3 5-7" fill="none" stroke="#333" strokeWidth="2" />
          </svg>
        </span>
        <label htmlFor={id} className="text-[13px] leading-4">{label}</label>
      </div>
      <p className="text-xs leading-4 text-[#777] font-['Noto_Sans',sans-serif]">{children}</p>
    </div>
  );
}

const crumbs = ['Forum', 'Ein-/Ausgabe und Laufwerke', 'Festplatten', 'Endlich eine SSD für die Kiste - max 120€ 250/256GB', 'Antworten'];

function ForumPage() {
  const [title, setTitle] = useState('AW: Endlich eine SSD für die Kiste - max 120€ 250/256GB');
  const [icon, setIcon] = useState('none');

  return (
    <main className="w-[970px] shrink-0 bg-white text-black font-['DejaVu_Sans','Noto_Sans',sans-serif]">
      <div className="h-[5px] bg-[#f4f4f4] border-b border-[#d8d8d8]" />
      <div className="px-[14px] pt-5">
        <nav className="h-[21px] px-[5px] flex items-center gap-1 border border-[#e2e2e2] bg-[#f7f7f7] text-[13px] font-bold whitespace-nowrap font-['Noto_Sans',sans-serif]">
          {crumbs.map((c, i) => (
            <span key={c}>
              {i > 0 && <span className="mr-1 text-[#e8622a]">»</span>}
              <a href="#">{c}</a>
            </span>
          ))}
        </nav>

        <h1 className="mt-4 text-sm leading-4 font-bold">Antworten</h1>
        <p className="mb-[6px] text-[10px] leading-[14px]">
          Thema: <a href="#" className="text-[#33339a]">Endlich eine SSD für die Kiste - max 120€ 250/256GB</a>
        </p>

        <Panel title="Nachricht" className="pb-[11px]">
          <div className="pl-5 pt-2">
            <label htmlFor="title" className="block mb-px pt-0.5 text-[13px] leading-4 font-bold">Titel:</label>
            <input
              id="title"
              type="text"
              value={title}
              onChange={(e) => setTitle(e.target.value)}
              className="block w-[496px] h-[25px] px-1 border border-[#6b8caf] rounded-sm text-[13px] text-[#222] outline-none font-['DejaVu_Sans_Condensed','DejaVu_Sans',sans-serif]"
            />

            <div className="mt-5 flex">
              <Editor />
              <div className="w-[105px] pl-[11px]">
                <div className="grid grid-cols-[repeat(3,15px)] gap-[9px] pt-[3px]">
                  {smileys.map((s, i) => <Smiley key={i} index={i} {...s} />)}
                </div>
                <p className="w-[66px] mt-2 pt-0.5 text-center text-xs leading-4">
                  [<a href="#" className="text-[#33339a]">Weitere</a>]
                </p>
              </div>
            </div>

            <fieldset className="mt-5">
              <legend className="text-[13px] leading-4 font-bold">Beitragssymbole:</legend>
              <div className="mt-[3px] grid grid-cols-[repeat(7,71px)] gap-y-[7px] pl-0.5">
                {postIcons.map(([name, art]) => (
                  <label key={name} className="flex items-center gap-[5px]">
                    <Radio aria-label={name} checked={icon === name} onChange={() => setIcon(name)} />
                    {art}
                  </label>
                ))}
              </div>
              <label className="mt-2 pl-0.5 flex items-center gap-[6px] text-[13px] leading-4">
                <Radio checked={icon === 'none'} onChange={() => setIcon('none')} />
                Kein Symbol
              </label>
            </fieldset>
          </div>
        </Panel>

        <div className="mt-[5px] flex justify-end gap-1">
          {['Antworten', 'Vorschau'].map((b) => (
            <button key={b} className="h-[21px] px-[5px] border border-[#a8a8a8] bg-linear-to-b from-white to-[#e4e2e6] text-[11px] font-bold text-[#3a3a3a]">
              {b}
            </button>
          ))}
        </div>

        <Panel title="Zusätzliche Einstellungen" className="mt-[26px]">
          <div className="pl-5 pr-[14px] pt-[9px]">
            <div className="flex">
              <p className="w-[212px] text-[13px] leading-4">Verschiedene Einstellungen:</p>
              <div className="w-[480px]">
                <Option id="sig" label="Signatur anzeigen" defaultChecked>
                  Wenn du diese Option aktivierst, wird deine Signatur unter deinem Text angezeigt.
                </Option>
                <Option id="links" label="Links automatisch umwandeln" defaultChecked>
                  Wenn du diese Option aktivierst, werden URLs automatisch mit BB-Code ergänzt.<br />
                  www.beispiel.de wird zu [URL]http://www.beispiel.de[/URL].
                </Option>
                <Option id="smilies" label="Grafische Smileys deaktivieren">
                  Wenn du diese Option aktivierst, wird die Zeichenfolge <b>:)</b> nicht mit der Grafik{' '}
                  <span className="inline-block align-baseline"><SmileFace /></span><br />
                  ersetzt.
                </Option>
              </div>
            </div>
            <fieldset className="mt-[10px] h-16 border-t border-[#d0d8e0]">
              <legend className="pr-2 text-[13px] leading-4 font-bold">Anhänge:</legend>
            </fieldset>
          </div>
        </Panel>
      </div>
    </main>
  );
}

/* ---------- taskbar ---------- */

function Taskbar() {
  return (
    <footer className="h-10 shrink-0 flex items-center border-t border-[#6a7580] bg-linear-to-b from-[#1c232b] via-[#0c1118] via-20% to-[#0a0e14] text-white font-['Roboto','Noto_Sans',sans-serif]">
      <button aria-label="Start" className="ml-2 w-[38px] h-[38px] rounded-full border border-[#5a7a90] bg-radial-[at_50%_90%] from-[#3ad0f8] via-[#1a5a90] to-[#6a8898] flex items-center justify-center">
        <svg viewBox="0 0 20 20" className="w-6 h-6">
          <path d="M2 4q4-2 7 0L8 9Q5 7 1 9z" fill="#e8582a" />
          <path d="M10 4q4 2 8 0l-1 5q-4 2-8 0z" fill="#8cc63c" />
          <path d="M1 10q4-2 7 0l-1 6q-4-2-7 0z" fill="#3f9be8" />
          <path d="M9 10q4 2 8 0l-1 6q-4 2-8 0z" fill="#fbc830" />
        </svg>
      </button>
      <button aria-label="Explorer" className="ml-[27px]">
        <svg viewBox="0 0 32 32" className="w-8 h-8">
          <path d="M2 4h10l2 3h16v21H2z" fill="#f0d888" stroke="#c8a850" />
          <path d="M5 3h6v3H5z" fill="#40a048" /><path d="M13 5h6v3h-6z" fill="#d05030" /><path d="M21 7h6v3h-6z" fill="#3a90d8" />
          <path d="M2 11h28v17H2z" fill="#fae8a8" />
          <path d="M7 30V20q0-3 3-3h12q3 0 3 3v10h-5v-7h-8v7z" fill="#a0d8f0" stroke="#58a0c8" />
        </svg>
      </button>
      <button aria-label="Media Player" className="ml-[31px]">
        <svg viewBox="0 0 28 28" className="w-7 h-7">
          <path d="M6 3h20v22H6z" fill="#5a98c8" /><path d="M1 4h21v22H1z" fill="#98c8e8" stroke="#5a98c8" />
          <circle cx="11" cy="14" r="8.500" fill="#f08020" stroke="#fff" />
          <path d="M8 9v10l8-5z" fill="#fff" />
        </svg>
      </button>
      <button aria-label="Chrome" className="ml-5 w-[58px] h-[38px] flex items-center justify-center rounded-sm border border-[#d8d8d8] bg-linear-to-br from-[#e8e8e8] via-[#9a9a9a] to-[#707478]">
        <svg viewBox="0 0 28 28" className="w-7 h-7">
          <circle cx="14" cy="14" r="13.500" fill="#fbd034" />
          <path d="M14 14 2.300 7.300A13.500 13.500 0 0 1 25.700 7.300z" fill="#dc3a2c" />
          <path d="M2.300 7.300A13.500 13.500 0 0 0 14 27.500L20 17 14 14 8 17z" fill="#3fa548" />
          <path d="M14 .500A13.500 13.500 0 0 1 25.700 7.500H14z" fill="#dc3a2c" />
          <circle cx="14" cy="14" r="6.500" fill="#fff" /><circle cx="14" cy="14" r="5" fill="#4a88d8" />
        </svg>
      </button>
      <button aria-label="Steam" className="ml-1 w-[50px] h-[38px] flex items-center justify-center rounded-sm border border-[#707880] bg-linear-to-br from-[#6a7278] to-[#20262c]">
        <svg viewBox="0 0 30 30" className="w-[30px] h-[30px]">
          <circle cx="15" cy="15" r="14" fill="#143a68" />
          <path d="M1 16l9 3 7-6 4 3-7 4q-1 5-4 4l-8-3q-1-3-1-5z" fill="#fff" />
          <circle cx="20" cy="11" r="4.500" fill="#143a68" stroke="#d8e0e8" strokeWidth="2" />
          <circle cx="20" cy="11" r="2" fill="#d8e0e8" />
        </svg>
      </button>
      <span className="w-1 h-[38px] border-r border-[#707880]" />
      <span className="w-1 h-[38px] border-r border-[#707880]" />
      <button aria-label="Evolve" className="ml-1 w-[58px] h-[38px] flex items-center justify-center rounded-sm border border-[#8a9098] bg-linear-to-br from-[#6a7278] to-[#20262c]">
        <svg viewBox="0 0 32 32" className="w-8 h-8">
          <rect width="32" height="32" fill="#050505" />
          <path d="M14 31Q8 27 5 21l-1-4 3 2 6 5L9 9l2-4 6 16V4l3 0 1 18 4-12 2 1-2 13 3-4 1 1q-2 8-8 10z" fill="#f03a18" />
        </svg>
      </button>

      <div className="ml-auto h-full flex items-center gap-2 text-[11px]">
        <span className="text-xs mb-1 mr-2">DE</span>
        <svg viewBox="0 0 8 5" className="w-2 h-[5px] mr-1"><path d="M0 5 4 0l4 5z" fill="#fff" /></svg>
        <svg viewBox="0 0 16 16" className="w-4 h-4">
          <path d="M2 1v15" stroke="#fff" strokeWidth="1.500" /><path d="M3 2h5l1 1h5v6H9L8 8H3z" fill="#eee" />
          <circle cx="11" cy="11" r="4.500" fill="#d02020" /><path d="M9 9l4 4M13 9l-4 4" stroke="#fff" strokeWidth="1.500" />
        </svg>
        <svg viewBox="0 0 16 16" className="w-4 h-4" fill="none" stroke="#fff" strokeWidth="1.500">
          <path d="M5 4h10v8H5zM10 12v3M6 15h8M1 1v4h3V1M2.500 5v9h3" />
        </svg>
        <svg viewBox="0 0 16 16" className="w-4 h-4">
          <path d="M1 5h3l4-4v14l-4-4H1z" fill="#fff" /><path d="M10 5q2 3 0 6M12 3q4 5 0 10" fill="none" stroke="#ddd" />
        </svg>
        <div className="ml-1 w-16 text-center leading-[17px]">
          07:03
          <br />
          26.02.2015
        </div>
        <button aria-label="Desktop anzeigen" className="w-[14px] h-full border border-[#5a6068] bg-linear-to-b from-[#4a5058] to-[#14181e]" />
      </div>
    </footer>
  );
}

export default function App() {
  return (
    <div className="h-screen flex flex-col overflow-hidden">
      <header className="shrink-0">
        <TabStrip />
        <Toolbar />
        <BookmarkBar />
      </header>

      <div className="relative flex-1 min-h-0 flex overflow-hidden">
        <div className="flex-1 min-w-0 flex bg-linear-to-b from-[#2e455d] to-[#71a3d5] to-25%">
          <div className="grow-[387] basis-0" />
          <ForumPage />
          <div className="relative grow-[546] basis-0">
            {/* hand-drawn pointer towards the smileys */}
            <svg viewBox="0 0 410 60" className="absolute -left-[108px] top-[270px] w-[410px] h-[60px] max-w-none pointer-events-none">
              <path d="M22 31.500h175" stroke="#fff" strokeWidth="3" />
              <path d="M224 30 311 10v11h86v21h-86v8z" fill="none" stroke="#000" strokeWidth="5" />
            </svg>
          </div>
        </div>
        <div className="w-[17px] bg-[#f1f1f1] flex flex-col items-center py-[7px]">
          <ScrollArrow />
          <div className="mt-[62px] mb-auto w-[13px] h-64 bg-[#bcbcbc] border border-[#a8a8a8]" />
          <ScrollArrow down />
        </div>
        <div className="absolute left-0 bottom-0 w-1/3 h-[21px] pl-[3px] flex items-center rounded-tr-sm bg-[#dedede] text-xs text-[#6a6a6a] font-['Roboto','Noto_Sans',sans-serif]">
          Warten auf AdBlock-Erweiterung...
        </div>
      </div>

      <Taskbar />
    </div>
  );
}
